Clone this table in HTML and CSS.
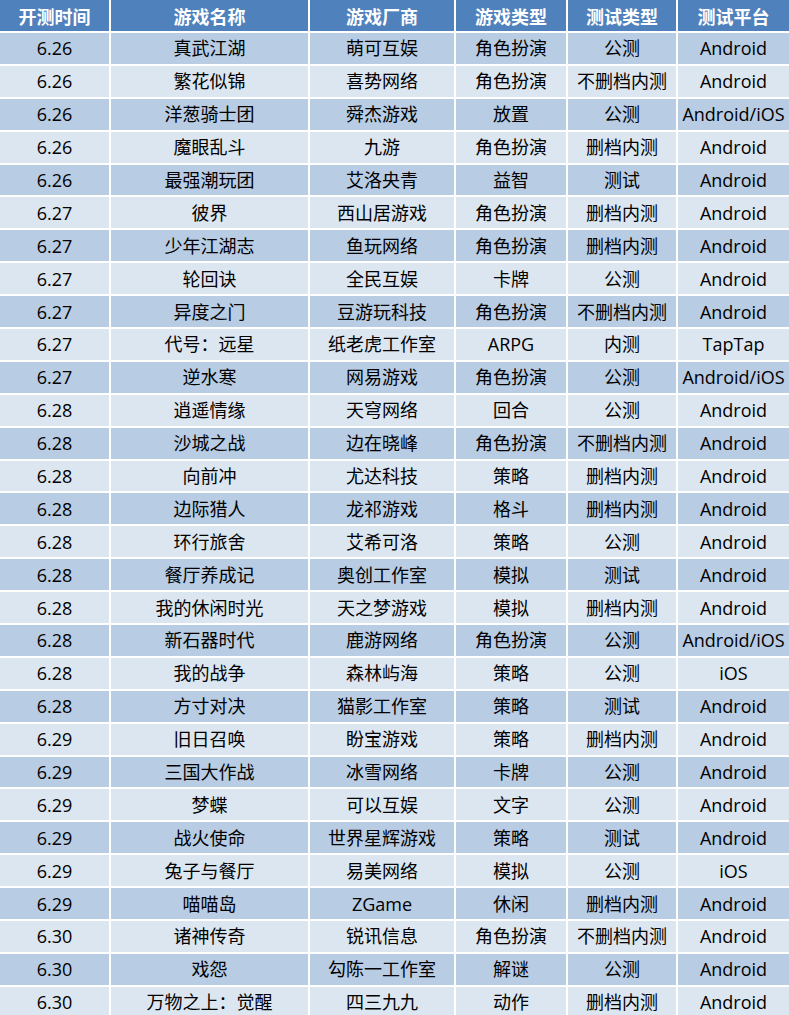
FILE: index.html
```html
<!DOCTYPE html>
<html lang="zh-CN">
<head>
<meta charset="utf-8">
<title>开测表</title>
<link rel="stylesheet" href="styles.css">
</head>
<body>
<table class="schedule">
  <colgroup>
    <col class="c-date"><col class="c-name"><col class="c-maker"><col class="c-genre"><col class="c-test"><col class="c-plat">
  </colgroup>
  <thead>
    <tr><th>开测时间</th><th>游戏名称</th><th>游戏厂商</th><th>游戏类型</th><th>测试类型</th><th>测试平台</th></tr>
  </thead>
  <tbody>
    <tr><td>6.26</td><td>真武江湖</td><td>萌可互娱</td><td>角色扮演</td><td>公测</td><td>Android</td></tr>
    <tr><td>6.26</td><td>繁花似锦</td><td>喜势网络</td><td>角色扮演</td><td>不删档内测</td><td>Android</td></tr>
    <tr><td>6.26</td><td>洋葱骑士团</td><td>舜杰游戏</td><td>放置</td><td>公测</td><td>Android/iOS</td></tr>
    <tr><td>6.26</td><td>魔眼乱斗</td><td>九游</td><td>角色扮演</td><td>删档内测</td><td>Android</td></tr>
    <tr><td>6.26</td><td>最强潮玩团</td><td>艾洛央青</td><td>益智</td><td>测试</td><td>Android</td></tr>
    <tr><td>6.27</td><td>彼界</td><td>西山居游戏</td><td>角色扮演</td><td>删档内测</td><td>Android</td></tr>
    <tr><td>6.27</td><td>少年江湖志</td><td>鱼玩网络</td><td>角色扮演</td><td>删档内测</td><td>Android</td></tr>
    <tr><td>6.27</td><td>轮回诀</td><td>全民互娱</td><td>卡牌</td><td>公测</td><td>Android</td></tr>
    <tr><td>6.27</td><td>异度之门</td><td>豆游玩科技</td><td>角色扮演</td><td>不删档内测</td><td>Android</td></tr>
    <tr><td>6.27</td><td>代号：远星</td><td>纸老虎工作室</td><td>ARPG</td><td>内测</td><td>TapTap</td></tr>
    <tr><td>6.27</td><td>逆水寒</td><td>网易游戏</td><td>角色扮演</td><td>公测</td><td>Android/iOS</td></tr>
    <tr><td>6.28</td><td>逍遥情缘</td><td>天穹网络</td><td>回合</td><td>公测</td><td>Android</td></tr>
    <tr><td>6.28</td><td>沙城之战</td><td>边在晓峰</td><td>角色扮演</td><td>不删档内测</td><td>Android</td></tr>
    <tr><td>6.28</td><td>向前冲</td><td>尤达科技</td><td>策略</td><td>删档内测</td><td>Android</td></tr>
    <tr><td>6.28</td><td>边际猎人</td><td>龙祁游戏</td><td>格斗</td><td>删档内测</td><td>Android</td></tr>
    <tr><td>6.28</td><td>环行旅舍</td><td>艾希可洛</td><td>策略</td><td>公测</td><td>Android</td></tr>
    <tr><td>6.28</td><td>餐厅养成记</td><td>奥创工作室</td><td>模拟</td><td>测试</td><td>Android</td></tr>
    <tr><td>6.28</td><td>我的休闲时光</td><td>天之梦游戏</td><td>模拟</td><td>删档内测</td><td>Android</td></tr>
    <tr><td>6.28</td><td>新石器时代</td><td>鹿游网络</td><td>角色扮演</td><td>公测</td><td>Android/iOS</td></tr>
    <tr><td>6.28</td><td>我的战争</td><td>森林屿海</td><td>策略</td><td>公测</td><td>iOS</td></tr>
    <tr><td>6.28</td><td>方寸对决</td><td>猫影工作室</td><td>策略</td><td>测试</td><td>Android</td></tr>
    <tr><td>6.29</td><td>旧日召唤</td><td>盼宝游戏</td><td>策略</td><td>删档内测</td><td>Android</td></tr>
    <tr><td>6.29</td><td>三国大作战</td><td>冰雪网络</td><td>卡牌</td><td>公测</td><td>Android</td></tr>
    <tr><td>6.29</td><td>梦蝶</td><td>可以互娱</td><td>文字</td><td>公测</td><td>Android</td></tr>
    <tr><td>6.29</td><td>战火使命</td><td>世界星辉游戏</td><td>策略</td><td>测试</td><td>Android</td></tr>
    <tr><td>6.29</td><td>兔子与餐厅</td><td>易美网络</td><td>模拟</td><td>公测</td><td>iOS</td></tr>
    <tr><td>6.29</td><td>喵喵岛</td><td>ZGame</td><td>休闲</td><td>删档内测</td><td>Android</td></tr>
    <tr><td>6.30</td><td>诸神传奇</td><td>锐讯信息</td><td>角色扮演</td><td>不删档内测</td><td>Android</td></tr>
    <tr><td>6.30</td><td>戏怨</td><td>勾陈一工作室</td><td>解谜</td><td>公测</td><td>Android</td></tr>
    <tr><td>6.30</td><td>万物之上：觉醒</td><td>四三九九</td><td>动作</td><td>删档内测</td><td>Android</td></tr>
  </tbody>
</table>
</body>
</html>
```

FILE: styles.css
```css
html, body {
  margin: 0;
  padding: 0;
  background: #ffffff;
}

.schedule {
  width: 789px;
  table-layout: fixed;
  border-collapse: collapse;
  font-family: "Open Sans", "Noto Sans CJK SC", sans-serif;
  font-size: 18px;
  color: #000000;
}

.c-date { width: 110px; }
.c-name { width: 199px; }
.c-maker { width: 146px; }
.c-genre { width: 112px; }
.c-test { width: 110px; }
.c-plat { width: 112px; }

.schedule th,
.schedule td {
  border: 2px solid #ffffff;
  padding: 0;
  text-align: center;
  vertical-align: middle;
  white-space: nowrap;
  overflow: hidden;
}

.schedule tr:first-child th,
.schedule tbody tr:first-child td {
  border-top-width: 1px;
}

.schedule th:first-child,
.schedule td:first-child {
  border-left: 0;
}

.schedule th:last-child,
.schedule td:last-child {
  border-right: 0;
}

.schedule thead th {
  background: #4f81bd;
  color: #ffffff;
  font-weight: bold;
  height: 31px;
  border-top: 0;
}

.schedule tbody td {
  height: 30.9px;
  line-height: 30px;
}

.schedule tbody tr:nth-child(odd) td {
  background: #b8cce4;
}

.schedule tbody tr:nth-child(even) td {
  background: #dce6f1;
}
```
